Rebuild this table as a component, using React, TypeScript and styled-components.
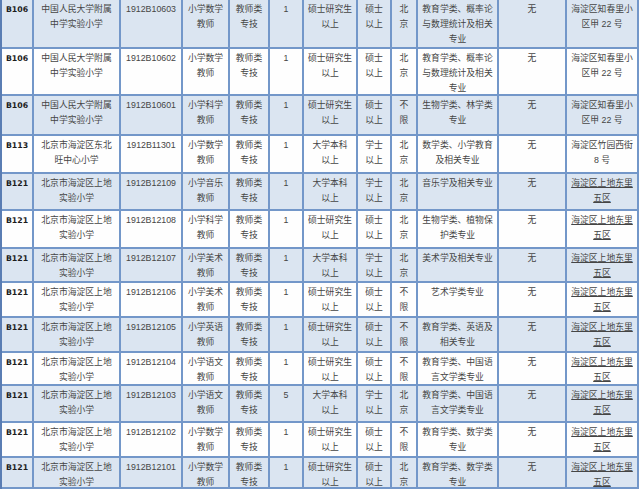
import React from "react";
import styled, { createGlobalStyle } from "styled-components";

const GlobalStyle = createGlobalStyle`
  html, body {
    margin: 0;
    padding: 0;
    background: #ffffff;
  }
`;

const COLS = [32, 87, 62, 47, 40, 34, 54, 34, 26, 81, 68, 72];

const Table = styled.div`
  width: 637px;
  border-left: 2px solid #5a7db3;
  display: flex;
  flex-direction: column;
  font-family: "Liberation Sans", "Noto Sans CJK SC", sans-serif;
  font-size: 8.8px;
  color: #454545;
`;

const Row = styled.div<{ $h: number; $alt: boolean }>`
  display: grid;
  grid-template-columns: ${COLS.map((w) => `${w}px`).join(" ")};
  height: ${(p) => p.$h}px;
  box-sizing: border-box;
  border-bottom: 2px solid #7397c9;
  background: ${(p) => (p.$alt ? "#dbe5f1" : "#fefefe")};
`;

const Cell = styled.div<{ $id?: boolean; $link?: boolean }>`
  box-sizing: border-box;
  border-right: 2px solid #7397c9;
  padding-top: 2px;
  text-align: center;
  line-height: 15px;
  white-space: nowrap;
  overflow: hidden;
  ${(p) =>
    p.$id &&
    `
    font-family: "DejaVu Sans", sans-serif;
    font-weight: bold;
    font-size: 7.8px;
    color: #1c1c1c;
  `}
  ${(p) => p.$link && `text-decoration: underline;`}
`;

const Line = styled.span`
  display: block;
`;

type RowData = {
  h: number;
  id: string;
  school: string[];
  code: string;
  post: string[];
  count: string;
  edu: string[];
  degree: string[];
  hukou: string[];
  major: string[];
  addr: string[];
  link?: boolean;
};

const RUC = ["中国人民大学附属", "中学实验小学"];
const SD = ["北京市海淀区上地", "实验小学"];
const SDADDR = ["海淀区上地东里", "五区"];
const ZCL = ["海淀区知春里小", "区甲 22 号"];
const TYPE = ["教师类", "专技"];
const MA = ["硕士研究生", "以上"];
const MAD = ["硕士", "以上"];
const BA = ["大学本科", "以上"];
const BAD = ["学士", "以上"];
const BJ = ["北", "京"];
const BX = ["不", "限"];

const rows: RowData[] = [
  { h: 49, id: "B106", school: RUC, code: "1912B10603", post: ["小学数学", "教师"], count: "1", edu: MA, degree: MAD, hukou: BJ, major: ["教育学类、概率论", "与数理统计及相关", "专业"], addr: ZCL },
  { h: 47, id: "B106", school: RUC, code: "1912B10602", post: ["小学数学", "教师"], count: "1", edu: MA, degree: MAD, hukou: BJ, major: ["教育学类、概率论", "与数理统计及相关", "专业"], addr: ZCL },
  { h: 40, id: "B106", school: RUC, code: "1912B10601", post: ["小学科学", "教师"], count: "1", edu: MA, degree: MAD, hukou: BX, major: ["生物学类、林学类", "专业"], addr: ZCL },
  { h: 38, id: "B113", school: ["北京市海淀区东北", "旺中心小学"], code: "1912B11301", post: ["小学数学", "教师"], count: "1", edu: BA, degree: BAD, hukou: BJ, major: ["数学类、小学教育", "及相关专业"], addr: ["海淀区竹园西街", "8 号"] },
  { h: 37, id: "B121", school: SD, code: "1912B12109", post: ["小学音乐", "教师"], count: "1", edu: BA, degree: BAD, hukou: BJ, major: ["音乐学及相关专业"], addr: SDADDR, link: true },
  { h: 38, id: "B121", school: SD, code: "1912B12108", post: ["小学科学", "教师"], count: "1", edu: MA, degree: MAD, hukou: BJ, major: ["生物学类、植物保", "护类专业"], addr: SDADDR, link: true },
  { h: 34, id: "B121", school: SD, code: "1912B12107", post: ["小学美术", "教师"], count: "1", edu: BA, degree: BAD, hukou: BJ, major: ["美术学及相关专业"], addr: SDADDR, link: true },
  { h: 35, id: "B121", school: SD, code: "1912B12106", post: ["小学美术", "教师"], count: "1", edu: MA, degree: MAD, hukou: BX, major: ["艺术学类专业"], addr: SDADDR, link: true },
  { h: 35, id: "B121", school: SD, code: "1912B12105", post: ["小学英语", "教师"], count: "1", edu: MA, degree: MAD, hukou: BX, major: ["教育学类、英语及", "相关专业"], addr: SDADDR, link: true },
  { h: 33, id: "B121", school: SD, code: "1912B12104", post: ["小学语文", "教师"], count: "1", edu: MA, degree: MAD, hukou: BX, major: ["教育学类、中国语", "言文学类专业"], addr: SDADDR, link: true },
  { h: 37, id: "B121", school: SD, code: "1912B12103", post: ["小学语文", "教师"], count: "5", edu: BA, degree: BAD, hukou: BJ, major: ["教育学类、中国语", "言文学类专业"], addr: SDADDR, link: true },
  { h: 35, id: "B121", school: SD, code: "1912B12102", post: ["小学数学", "教师"], count: "1", edu: MA, degree: MAD, hukou: BX, major: ["教育学类、数学类", "专业"], addr: SDADDR, link: true },
  { h: 31, id: "B121", school: SD, code: "1912B12101", post: ["小学数学", "教师"], count: "1", edu: MA, degree: MAD, hukou: BJ, major: ["教育学类、数学类", "专业"], addr: SDADDR, link: true },
];

const Lines = ({ items }: { items: string[] }) => (
  <>
    {items.map((t, i) => (
      <Line key={i}>{t}</Line>
    ))}
  </>
);

export default function App() {
  return (
    <>
      <GlobalStyle />
      <Table>
        {rows.map((r, i) => (
          <Row key={r.code} $h={r.h} $alt={i % 2 === 0}>
            <Cell $id>{r.id}</Cell>
            <Cell>
              <Lines items={r.school} />
            </Cell>
            <Cell>{r.code}</Cell>
            <Cell>
              <Lines items={r.post} />
            </Cell>
            <Cell>
              <Lines items={TYPE} />
            </Cell>
            <Cell>{r.count}</Cell>
            <Cell>
              <Lines items={r.edu} />
            </Cell>
            <Cell>
              <Lines items={r.degree} />
            </Cell>
            <Cell>
              <Lines items={r.hukou} />
            </Cell>
            <Cell>
              <Lines items={r.major} />
            </Cell>
            <Cell>无</Cell>
            <Cell $link={r.link}>
              <Lines items={r.addr} />
            </Cell>
          </Row>
        ))}
      </Table>
    </>
  );
}
